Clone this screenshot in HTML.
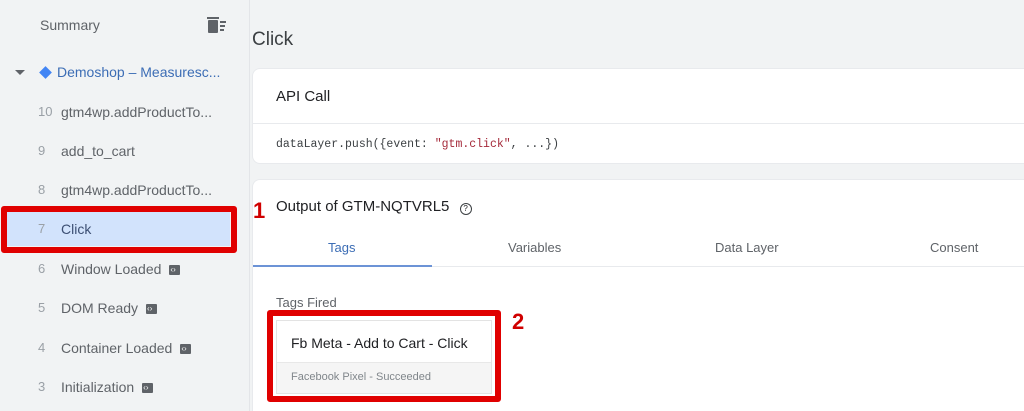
<!DOCTYPE html>
<html style="width:1024px;height:411px;overflow:hidden"><head><style>
*{margin:0;padding:0;box-sizing:border-box}
body{width:1024px;height:411px;overflow:hidden;background:#f1f3f4;font-family:"Liberation Sans",sans-serif;position:relative;color:#3c4043}
.abs{position:absolute;white-space:nowrap}
.side{position:absolute;left:0;top:0;width:250px;height:411px;background:#f1f3f4;border-right:1px solid #e3e5e8}
.it{position:absolute;left:0;width:250px;font-size:14px;color:#5f6368;line-height:20px}
.it .n{position:absolute;left:38px;color:#9aa0a6;font-size:13px}
.it .t{position:absolute;left:61px}
.ic{display:inline-block;width:11px;height:10px;background:#5f6368;border-radius:1px;margin-left:8px;vertical-align:-1px;position:relative}
.ic:after{content:"‹›";position:absolute;left:1px;top:-5px;font-size:8px;color:#fff}
.card{position:absolute;left:252px;right:-10px;background:#fff;border-radius:8px;border:1px solid #e8eaed}
.red{position:absolute;border:6px solid #e00000;border-radius:3px}
.num{position:absolute;color:#d00000;font-weight:bold;font-size:22px}
</style></head><body>
<div class="side">
<div class="abs" style="left:40px;top:17px;font-size:14px;color:#5f6368">Summary</div>
<svg class="abs" style="left:206px;top:16px" width="22" height="18" viewBox="0 0 22 18"><rect x="2" y="4" width="10" height="13" rx="1" fill="#5f6368"/><rect x="1" y="1" width="12" height="2" fill="#5f6368"/><rect x="14" y="5" width="6" height="2" fill="#5f6368"/><rect x="14" y="9" width="5" height="2" fill="#5f6368"/><rect x="14" y="13" width="4" height="2" fill="#5f6368"/></svg>
<div class="abs" style="left:15px;top:70px;width:0;height:0;border-left:5px solid transparent;border-right:5px solid transparent;border-top:5px solid #5f6368"></div>
<div class="abs" style="left:41px;top:68px;width:9px;height:9px;background:#4285f4;transform:rotate(45deg)"></div>
<div class="abs" style="left:57px;top:64px;font-size:14px;color:#3c6db5">Demoshop – Measuresc...</div>
<div class="it" style="top:102px"><span class="n">10</span><span class="t">gtm4wp.addProductTo...</span></div>
<div class="it" style="top:141px"><span class="n">9</span><span class="t">add_to_cart</span></div>
<div class="it" style="top:180px"><span class="n">8</span><span class="t">gtm4wp.addProductTo...</span></div>
<div class="abs" style="left:6px;top:212px;width:224px;height:34px;background:#d2e3fc"></div>
<div class="it" style="top:219px"><span class="n">7</span><span class="t" style="color:#3c4f73">Click</span></div>
<div class="it" style="top:259px"><span class="n">6</span><span class="t">Window Loaded<span class="ic"></span></span></div>
<div class="it" style="top:298px"><span class="n">5</span><span class="t">DOM Ready<span class="ic"></span></span></div>
<div class="it" style="top:338px"><span class="n">4</span><span class="t">Container Loaded<span class="ic"></span></span></div>
<div class="it" style="top:377px"><span class="n">3</span><span class="t">Initialization<span class="ic"></span></span></div>
</div>
<div class="red" style="left:1px;top:206px;width:236px;height:47px"></div>
<div class="abs" style="left:252px;top:29px;font-size:19px;color:#3c4043">Click</div>
<div class="card" style="top:68px;height:96px">
<div class="abs" style="left:23px;top:19px;font-size:15px;color:#202124">API Call</div>
<div class="abs" style="left:0;right:0;top:54px;border-top:1px solid #e8eaed"></div>
<div class="abs" style="left:23px;top:69px;font-family:'Liberation Mono',monospace;font-size:11.5px;color:#3c4043">dataLayer.push({event: <span style="color:#a52a3a">"gtm.click"</span>, ...})</div>
</div>
<div class="card" style="top:179px;height:232px;border-bottom:none;border-radius:8px 8px 0 0">
<div class="abs" style="left:23px;top:18px;font-size:15px;color:#202124">Output of GTM-NQTVRL5 <span style="display:inline-block;width:12px;height:12px;border:1.5px solid #3c4043;border-radius:50%;font-size:8px;text-align:center;line-height:9px;margin-left:6px;vertical-align:0">?</span></div>
<div class="abs" style="left:75px;top:60px;font-size:13px;color:#3c6db5">Tags</div>
<div class="abs" style="left:255px;top:60px;font-size:13px;color:#5f6368">Variables</div>
<div class="abs" style="left:462px;top:60px;font-size:13px;color:#5f6368">Data Layer</div>
<div class="abs" style="left:677px;top:60px;font-size:13px;color:#5f6368">Consent</div>
<div class="abs" style="left:0;right:0;top:86px;border-top:1px solid #e8eaed"></div>
<div class="abs" style="left:0;width:179px;top:85px;height:2px;background:#6c93d6"></div>
<div class="abs" style="left:23px;top:115px;font-size:13px;color:#5f6368">Tags Fired</div>
<div class="abs" style="left:23px;top:140px;width:216px;height:74px;border:1px solid #e3e3e3;background:#fff">
<div class="abs" style="left:14px;top:14px;font-size:14px;color:#202124">Fb Meta - Add to Cart - Click</div>
<div class="abs" style="left:0;right:0;top:41px;bottom:0;background:#f5f5f5;border-top:1px solid #e8e8e8"></div>
<div class="abs" style="left:14px;top:50px;font-size:11px;color:#80868b">Facebook Pixel - Succeeded</div>
</div>
</div>
<div class="red" style="left:267px;top:310px;width:234px;height:92px"></div>
<div class="num" style="left:253px;top:198px">1</div>
<div class="num" style="left:512px;top:309px">2</div>
</body></html>
